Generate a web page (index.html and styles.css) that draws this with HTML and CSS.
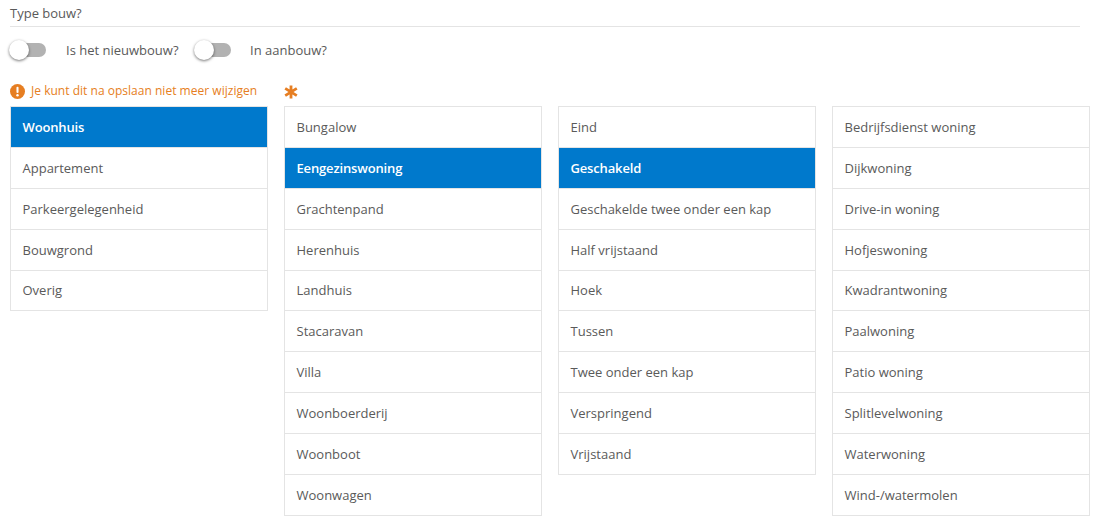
FILE: index.html
```html
<!DOCTYPE html>
<html lang="nl">
<head>
<meta charset="utf-8">
<title>Type bouw</title>
<link rel="stylesheet" href="styles.css">
</head>
<body>
<h2 class="title">Type bouw?</h2>
<div class="toggles">
  <span class="toggle"><span class="knob"></span></span><span class="toggle-label first">Is het nieuwbouw?</span>
  <span class="toggle"><span class="knob"></span></span><span class="toggle-label">In aanbouw?</span>
</div>
<div class="columns">
  <div class="col">
    <div class="head warn">
      <svg class="warn-icon" viewBox="0 0 16 16" width="15" height="15"><circle cx="8" cy="8" r="8" fill="#e67e22"/><rect x="6.9" y="3" width="2.2" height="6.6" rx="1" fill="#fff"/><circle cx="8" cy="12" r="1.3" fill="#fff"/></svg>
      <span class="warn-text">Je kunt dit na opslaan niet meer wijzigen</span>
    </div>
    <ul class="list">
      <li class="on">Woonhuis</li><li>Appartement</li><li>Parkeergelegenheid</li><li>Bouwgrond</li><li>Overig</li>
    </ul>
  </div>
  <div class="col">
    <div class="head">
      <svg class="star" viewBox="0 0 14 14" width="14" height="14"><path d="M7 0.5V13.5M1.2 3.4L12.8 10.6M12.8 3.4L1.2 10.6" stroke="#e67e22" stroke-width="2.8" fill="none"/></svg>
    </div>
    <ul class="list">
      <li>Bungalow</li><li class="on">Eengezinswoning</li><li>Grachtenpand</li><li>Herenhuis</li><li>Landhuis</li><li>Stacaravan</li><li>Villa</li><li>Woonboerderij</li><li>Woonboot</li><li>Woonwagen</li>
    </ul>
  </div>
  <div class="col">
    <div class="head"></div>
    <ul class="list">
      <li>Eind</li><li class="on">Geschakeld</li><li>Geschakelde twee onder een kap</li><li>Half vrijstaand</li><li>Hoek</li><li>Tussen</li><li>Twee onder een kap</li><li>Verspringend</li><li>Vrijstaand</li>
    </ul>
  </div>
  <div class="col">
    <div class="head"></div>
    <ul class="list">
      <li>Bedrijfsdienst woning</li><li>Dijkwoning</li><li>Drive-in woning</li><li>Hofjeswoning</li><li>Kwadrantwoning</li><li>Paalwoning</li><li>Patio woning</li><li>Splitlevelwoning</li><li>Waterwoning</li><li>Wind-/watermolen</li>
    </ul>
  </div>
</div>
</body>
</html>
```

FILE: styles.css
```css
* { box-sizing: border-box; }
html, body { margin: 0; padding: 0; background: #fff; }
body {
  padding: 0 10px;
  font-family: "Open Sans", sans-serif;
  font-size: 13px;
  color: #5a5a5a;
  overflow: hidden;
}
.title {
  margin: 0 10px 0 0;
  height: 27px;
  padding-top: 4px;
  font-size: 13px;
  line-height: 18px;
  font-weight: 400;
  color: #5a5a5a;
  border-bottom: 1px solid #e4e4e4;
}
.toggles {
  display: flex;
  align-items: center;
  height: 20px;
  margin-top: 13px;
}
.toggle {
  position: relative;
  display: block;
  width: 35px;
  height: 14px;
  margin-left: 1px;
  border-radius: 7px;
  background: #b2b2b2;
}
.knob {
  position: absolute;
  left: -2px;
  top: -3px;
  width: 20px;
  height: 20px;
  border-radius: 50%;
  background: #fff;
  box-shadow: 0 1px 3px rgba(0, 0, 0, 0.55);
}
.toggle-label { margin-left: 19.5px; }
.toggle-label.first { margin-left: 20px; margin-right: 16px; }
.columns {
  display: flex;
  align-items: flex-start;
  gap: 16px;
  margin-top: 20px;
}
.col { width: 258px; flex: none; }
.head {
  display: flex;
  align-items: center;
  height: 26px;
  padding-bottom: 3px;
}
.warn {
  gap: 6px;
  font-size: 12px;
  color: #e67e22;
}
.warn-text { margin-bottom: 2px; letter-spacing: 0.02px; }
.star { margin-top: 1px; }
.list {
  list-style: none;
  margin: 0;
  padding: 0;
  border: 1px solid #e4e4e4;
  border-bottom: 0;
}
.list li {
  display: flex;
  align-items: center;
  height: 40.875px;
  padding: 0 11.5px;
  border-bottom: 1px solid #e4e4e4;
  background: #fff;
}
.list li.on {
  background: #0079cc;
  color: #fff;
  font-weight: 580;
  letter-spacing: -0.15px;
}
```
